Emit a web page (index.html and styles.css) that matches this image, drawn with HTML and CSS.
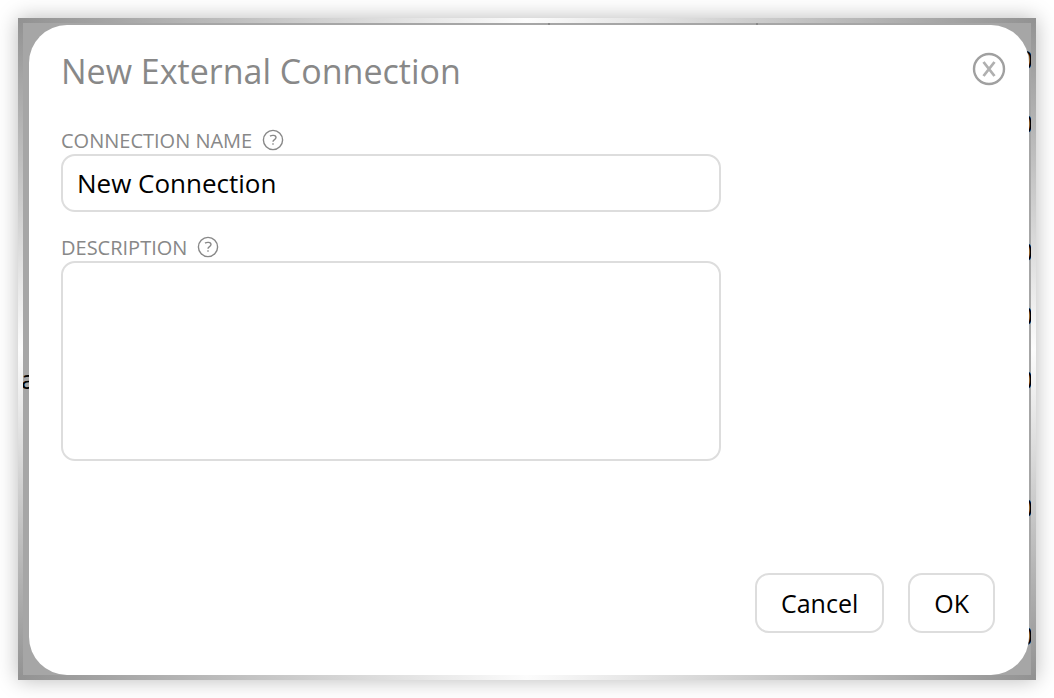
FILE: index.html
```
<!DOCTYPE html>
<html lang="en">

<head>
	<meta charset="UTF-8">
	<meta name="viewport" content="width=device-width, initial-scale=1.0">
	<title>New External Connection</title>
	<link rel="stylesheet" href="styles.css">
</head>

<body>
	<div class="frame">
		<!-- page below the dialog -->
		<div class="backdrop" aria-hidden="true">
			<table class="listing">
				<tr><td></td><td></td><td>0</td></tr>
				<tr><td></td><td></td><td>0</td></tr>
				<tr><td></td><td></td><td></td></tr>
				<tr><td></td><td></td><td>0</td></tr>
				<tr><td></td><td></td><td>0</td></tr>
				<tr><td>a</td><td></td><td>0</td></tr>
				<tr><td></td><td></td><td></td></tr>
				<tr><td></td><td></td><td>0</td></tr>
				<tr><td></td><td></td><td></td></tr>
				<tr><td></td><td></td><td>0</td></tr>
			</table>
		</div>

		<form class="dialog" role="dialog" aria-labelledby="dialog-title">
			<header class="dialog-header">
				<h1 id="dialog-title">New External Connection</h1>
				<button type="button" class="close" aria-label="Close">
					<svg width="34" height="34" viewBox="0 0 34 34" fill="none" stroke="#a0a0a0">
						<circle cx="17" cy="17" r="15" stroke-width="2.4" />
						<path d="M11.5 10L22.5 24M22.5 10L11.5 24" stroke="#b0b0b0" stroke-width="2.8" />
					</svg>
				</button>
			</header>

			<div class="field">
				<div class="field-label">
					<label for="name">CONNECTION NAME</label>
					<svg class="help" width="22" height="22" viewBox="0 0 22 22" fill="none" stroke="#888" stroke-width="1.4">
						<circle cx="11" cy="11" r="9.6" />
						<path d="M8 7.2C9.6 6.1 14 5.8 14 8.5C14 10.6 11 10.6 11 12.8M11 14.2V15.8" />
					</svg>
				</div>
				<input type="text" id="name" value="New Connection">
			</div>

			<div class="field">
				<div class="field-label">
					<label for="description">DESCRIPTION</label>
					<svg class="help" width="22" height="22" viewBox="0 0 22 22" fill="none" stroke="#888" stroke-width="1.4">
						<circle cx="11" cy="11" r="9.6" />
						<path d="M8 7.2C9.6 6.1 14 5.8 14 8.5C14 10.6 11 10.6 11 12.8M11 14.2V15.8" />
					</svg>
				</div>
				<textarea id="description"></textarea>
			</div>

			<footer class="actions">
				<button type="button">Cancel</button>
				<button type="submit">OK</button>
			</footer>
		</form>
	</div>
</body>

</html>
```

FILE: styles.css
```
* {
	box-sizing: border-box;
}

body {
	display: flex;
	min-height: 100vh;
	margin: 0;
	padding: 18px;
	background-color: white;
	font-family: "Open Sans", sans-serif;
	font-size: 26px;
}

.frame {
	flex: 1;
	display: grid;
	padding: 5px;
	background:
		linear-gradient(90deg, #929292, #fcfcfc, #929292) top / 100% 5px no-repeat,
		linear-gradient(90deg, #929292, #fcfcfc, #929292) bottom / 100% 5px no-repeat,
		linear-gradient(#929292, #fcfcfc, #929292) left / 5px 100% no-repeat,
		linear-gradient(#929292, #fcfcfc, #929292) right / 5px 100% no-repeat;
	box-shadow: 0 0 20px rgba(0, 0, 0, 0.28);
}

.backdrop,
.dialog {
	grid-area: 1 / 1;
	min-width: 0;
}

.backdrop {
	overflow: hidden;
	background-color: #a6a6a6;
}

/* runs a little past both edges so the outer cells are cut off */
.listing {
	width: calc(100% + 4px);
	margin-left: -2px;
	table-layout: fixed;
	border-collapse: separate;
	border-spacing: 0;
}

.listing td {
	height: 64px;
	padding: 0;
	border-right: 2px solid #888;
}

.listing tr:first-child td {
	height: 68px;
	padding-top: 4px;
}

.listing td:first-child {
	width: 529px;
}

.listing td:nth-child(2) {
	width: 208px;
}

.listing td:last-child {
	border-right: none;
	text-align: right;
}

.dialog {
	display: flex;
	flex-direction: column;
	margin: 2px 2px 0 6px;
	padding: 20px 34px 42px 32px;
	border-radius: 38px;
	background-color: white;
}

.dialog-header {
	display: flex;
	justify-content: space-between;
	align-items: flex-start;
	margin-bottom: 32px;
}

h1 {
	margin: 0;
	color: #888;
	font-size: 34px;
	font-weight: normal;
	line-height: 52px;
}

.close {
	display: flex;
	margin: 7px -11px 0 0;
	padding: 0;
	border: none;
	background: none;
	cursor: pointer;
}

.field {
	display: flex;
	flex-direction: column;
	width: 100%;
	max-width: 660px;
	margin-bottom: 24px;
}

.field-label {
	display: flex;
	align-items: flex-start;
	gap: 10px;
	height: 25px;
	color: #888;
	font-size: 20px;
	line-height: 23px;
}

input,
textarea {
	padding: 0 14px;
	border: 2px solid #ddd;
	border-radius: 14px;
	background-color: white;
	color: black;
	font: inherit;
	outline: none;
}

input {
	height: 58px;
}

textarea {
	height: 200px;
	padding: 10px 14px;
	resize: none;
}

.actions {
	display: flex;
	justify-content: flex-end;
	gap: 24px;
	margin-top: auto;
}

.actions button {
	height: 60px;
	padding: 0 24px;
	border: 2px solid #ddd;
	border-radius: 14px;
	background-color: white;
	color: black;
	font: inherit;
	font-size: 25px;
	cursor: pointer;
}
```
